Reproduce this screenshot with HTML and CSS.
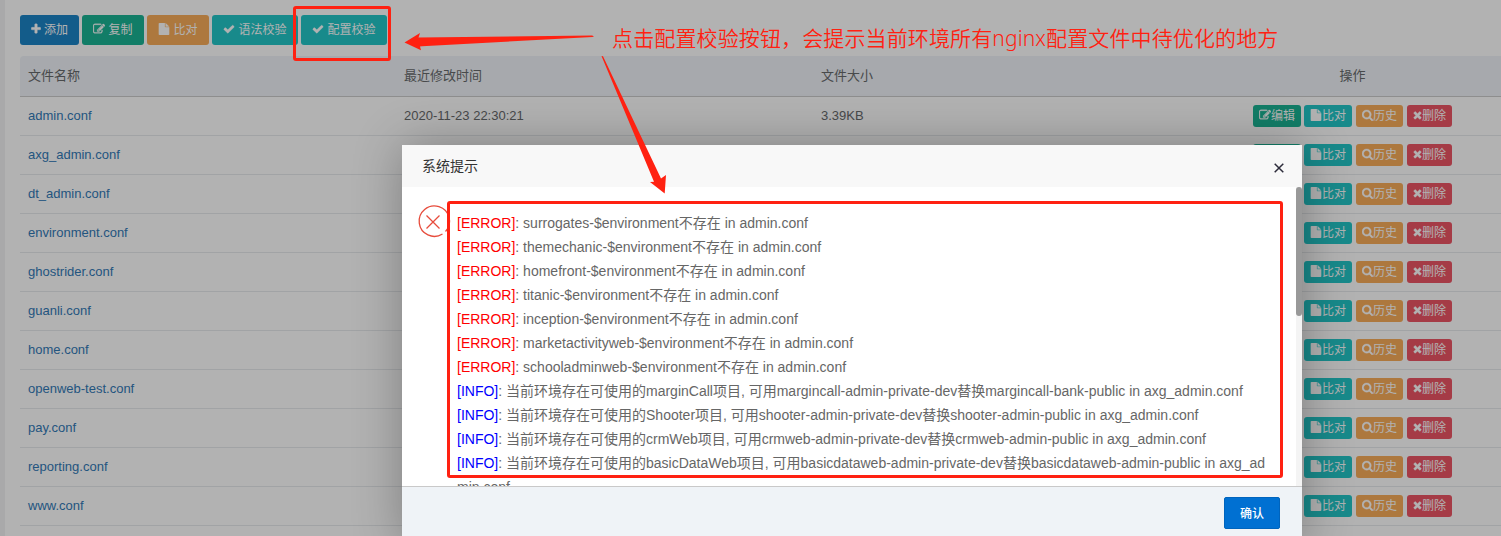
FILE: index.html
```html
<!DOCTYPE html>
<html lang="zh-CN">
<head>
<meta charset="utf-8">
<title>nginx 配置文件</title>
<link rel="stylesheet" href="styles.css">
</head>
<body>
<svg class="sprite" aria-hidden="true">
  <symbol id="plus" viewBox="192 0 1408 1792"><path d="M1600 736v192q0 40-28 68t-68 28h-416v416q0 40-28 68t-68 28h-192q-40 0-68-28t-28-68v-416h-416q-40 0-68-28t-28-68v-192q0-40 28-68t68-28h416v-416q0-40 28-68t68-28h192q40 0 68 28t28 68v416h416q40 0 68 28t28 68z"/></symbol>
  <symbol id="check" viewBox="0 0 1792 1792"><path d="M1671 566q0 40-28 68l-724 724-136 136q-28 28-68 28t-68-28l-136-136-362-362q-28-28-28-68t28-68l136-136q28-28 68-28t68 28l294 295 656-657q28-28 68-28t68 28l136 136q28 28 28 68z"/></symbol>
  <symbol id="search" viewBox="64 0 1664 1792"><path d="M1216 832q0-185-131.500-316.500t-316.500-131.500-316.500 131.500-131.500 316.500 131.500 316.500 316.500 131.500 316.500-131.500 131.500-316.500zm512 832q0 52-38 90t-90 38q-54 0-90-38l-343-342q-179 124-399 124-143 0-273.500-55.500t-225-150-150-225-55.500-273.500 55.500-273.500 150-225 225-150 273.500-55.500 273.500 55.500 225 150 150 225 55.500 273.500q0 220-124 399l343 343q37 37 37 90z"/></symbol>
  <symbol id="file" viewBox="128 0 1536 1792"><path d="M1152 512v-472q22 14 36 28l408 408q14 14 28 36h-472zm-128 32q0 40 28 68t68 28h544v1056q0 40-28 68t-68 28h-1344q-40 0-68-28t-28-68v-1600q0-40 28-68t68-28h800v544z"/></symbol>
  <symbol id="times" viewBox="192 0 1408 1792"><path d="M1490 1322q0 40-28 68l-136 136q-28 28-68 28t-68-28l-294-294-294 294q-28 28-68 28t-68-28l-136-136q-28-28-28-68t28-68l294-294-294-294q-28-28-28-68t28-68l136-136q28-28 68-28t68 28l294 294 294-294q28-28 68-28t68 28l136 136q28 28 28 68t-28 68l-294 294 294 294q28 28 28 68z"/></symbol>
  <symbol id="edit" viewBox="0 0 1792 1792"><path d="M888 1184l116-116-152-152-116 116v56h96v96h56zm440-720q-16-16-33 1l-350 350q-17 17-1 33t33-1l350-350q17-17 1-33zm80 594v190q0 119-84.500 203.500t-203.500 84.500h-832q-119 0-203.500-84.500t-84.500-203.500v-832q0-119 84.500-203.500t203.500-84.500h832q63 0 117 25 15 7 18 23 3 17-9 29l-49 49q-14 14-32 8-23-6-45-6h-832q-66 0-113 47t-47 113v832q0 66 47 113t113 47h832q66 0 113-47t47-113v-126q0-13 9-22l64-64q15-15 35-7t20 29zm-96-738l288 288-672 672h-288v-288zm444 132l-92 92-288-288 92-92q28-28 68-28t68 28l152 152q28 28 28 68t-28 68z"/></symbol>
</svg>

<main class="panel">
  <div class="toolbar">
    <button class="btn primary w-add"><svg class="i-narrow"><use href="#plus"/></svg>添加</button>
    <button class="btn success w-mid"><svg><use href="#edit"/></svg>复制</button>
    <button class="btn warning w-mid"><svg><use href="#file"/></svg>比对</button>
    <button class="btn info w-wide"><svg><use href="#check"/></svg>语法校验</button>
    <button class="btn info w-wide"><svg><use href="#check"/></svg>配置校验</button>
  </div>
  <div class="table" id="files">
    <div class="row head"><span>文件名称</span><span>最近修改时间</span><span>文件大小</span><span class="ops">操作</span></div>
  </div>
</main>

<div class="shade"></div>

<section class="dialog">
  <header class="dialog-title"><span>系统提示</span><svg class="close" viewBox="0 0 10 10"><path d="M.7.7l8.600 8.600M9.300.7L.7 9.300"/></svg></header>
  <div class="dialog-body">
    <svg class="fail" viewBox="0 0 32 32"><path d="M28.500 25.500A15.200 15.200 0 1 0 25.500 28M9.500 9.500l13 13M22.500 9.500l-13 13"/></svg>
    <div class="log">
      <p><b class="error">[ERROR]</b>: surrogates-$environment不存在 in admin.conf</p>
      <p><b class="error">[ERROR]</b>: themechanic-$environment不存在 in admin.conf</p>
      <p><b class="error">[ERROR]</b>: homefront-$environment不存在 in admin.conf</p>
      <p><b class="error">[ERROR]</b>: titanic-$environment不存在 in admin.conf</p>
      <p><b class="error">[ERROR]</b>: inception-$environment不存在 in admin.conf</p>
      <p><b class="error">[ERROR]</b>: marketactivityweb-$environment不存在 in admin.conf</p>
      <p><b class="error">[ERROR]</b>: schooladminweb-$environment不存在 in admin.conf</p>
      <p><b class="note">[INFO]</b>: 当前环境存在可使用的marginCall项目, 可用margincall-admin-private-dev替换margincall-bank-public in axg_admin.conf</p>
      <p><b class="note">[INFO]</b>: 当前环境存在可使用的Shooter项目, 可用shooter-admin-private-dev替换shooter-admin-public in axg_admin.conf</p>
      <p><b class="note">[INFO]</b>: 当前环境存在可使用的crmWeb项目, 可用crmweb-admin-private-dev替换crmweb-admin-public in axg_admin.conf</p>
      <p><b class="note">[INFO]</b>: 当前环境存在可使用的basicDataWeb项目, 可用basicdataweb-admin-private-dev替换basicdataweb-admin-public in axg_ad<br>min.conf</p>
    </div>
    <div class="scroll"><div class="thumb"></div></div>
  </div>
  <footer class="dialog-foot"><button class="confirm">确认</button></footer>
</section>

<div class="mark mark-button"></div>
<div class="mark mark-log"></div>
<svg class="arrows" viewBox="0 0 1501 536">
  <path d="M404.500 42.500L420 33l-1.500 4.500L592 35.500l2 .7-1.500.8L422 46.200l-2 .2 1 3.800z"/>
  <path d="M601.500 56l1.500.3L661 178.500l5-3.500-1.300 18.500L650 182l4-.3z"/>
</svg>
<div class="caption">点击配置校验按钮，会提示当前环境所有nginx配置文件中待优化的地方</div>
<script src="script.js"></script>
</body>
</html>
```
FILE: styles.css
```css
* { box-sizing: border-box; }
body {
  margin: 0;
  height: 536px;
  overflow: hidden;
  background: #f3f3f4;
  color: #676a6c;
  font: 13px/18px "Liberation Sans", "Noto Sans CJK SC", sans-serif;
}
button { font-family: inherit; border: 0; margin: 0; padding: 0; }
.sprite { display: none; }
.panel { margin-left: 5px; padding: 15px 0 0 15px; background: #fff; height: 536px; overflow: hidden; }
.toolbar { display: flex; gap: 3px; height: 41px; }
.btn {
  display: flex; align-items: center; justify-content: center; gap: 3px;
  height: 30px; border-radius: 3px; color: #fff; font-size: 12px; line-height: 18px;
}
.btn svg { width: 12px; height: 12px; margin-bottom: 2px; fill: currentColor; stroke: currentColor; stroke-width: 50; flex: none; overflow: visible; }
.btn .i-narrow { width: 10px; }
.w-add { width: 59px; }
.w-mid { width: 62px; }
.w-wide { width: 86px; }
.primary { background: #1c84c6; }
.success { background: #1ab394; }
.warning { background: #f8ac59; }
.info { background: #23c6c8; }
.danger { background: #ed5565; }
.row {
  display: grid; grid-template-columns: 376px 417px 391px 297px;
  height: 39px; align-items: center; border-bottom: 1px solid #e7eaec;
}
.row > span { padding-left: 8px; }
.row > .ops { padding: 0; display: flex; justify-content: center; }
.head { height: 41px; background: #eff3f8; border-bottom-color: #ccc; border-radius: 4px 0 0 0; }
.name { color: #337ab7; }
.ops .btn { height: 22px; gap: 0; }
.ops .edit { width: 48px; margin-right: 3px; }
.ops .diff { width: 48px; margin-right: 4px; }
.ops .hist { width: 47px; margin-right: 4px; }
.ops .del { width: 45px; }
.ops .hist svg { width: 11px; }
.ops .del svg { width: 9px; }
.shade { position: absolute; inset: 0; background: rgba(0, 0, 0, .3); }

.dialog {
  position: absolute; left: 402px; top: 145px; width: 900px; height: 400px;
  display: flex; flex-direction: column; background: #fff;
  box-shadow: 1px 1px 50px rgba(0, 0, 0, .3); border-radius: 2px;
}
.dialog-title {
  height: 42px; padding: 0 18px 0 20px; background: #f8f8f8; color: #333;
  display: flex; align-items: center; justify-content: space-between; font-size: 14px;
}
.close { width: 10px; height: 10px; margin-top: 4px; stroke: #2d2c3b; stroke-width: 1.500; fill: none; }
.dialog-body { height: 299px; display: flex; overflow: hidden; }
.fail { width: 32px; height: 32px; margin: 19px 8.500px 0 14.500px; flex: none; fill: none; stroke: #e74c3c; stroke-width: 1.300; overflow: visible; }
.log { flex: 1; padding-top: 24px; font-size: 14px; line-height: 24px; color: #666; white-space: nowrap; }
.log p { margin: 0; }
.log b { font-weight: 400; }
.error { color: #f00; }
.note { color: #00f; }
.scroll { width: 6px; background: #f4f4f4; }
.thumb { height: 129px; background: #999; border-radius: 3px; }
.dialog-foot {
  flex: 1; border-top: 1px solid #c9c9c9; background: #eff3f7;
  display: flex; justify-content: flex-end; padding: 10px 22px 0 0;
}
.confirm { width: 56px; height: 32px; padding-bottom: 2px; background: #0070d2; border: 1px solid #0064bd; border-radius: 2px; color: #fff; font-size: 12px; font-weight: 500; }

.mark { position: absolute; border: 3px solid #ff2111; border-radius: 3px; }
.mark-button { left: 293px; top: 6px; width: 98px; height: 55px; }
.mark-log { left: 447px; top: 201px; width: 836px; height: 277px; }
.arrows { position: absolute; left: 0; top: 0; width: 1501px; height: 536px; fill: #ff2111; }
.caption {
  position: absolute; left: 612px; top: 23px; white-space: nowrap; color: #ff2111;
  font: 350 21px/30px "Noto Sans", "Noto Sans CJK SC", sans-serif; letter-spacing: .13px;
}
```
FILE: script.js
```js
const files = [
  ["admin.conf", "2020-11-23 22:30:21", "3.39KB"],
  ["axg_admin.conf"], ["dt_admin.conf"], ["environment.conf"], ["ghostrider.conf"],
  ["guanli.conf"], ["home.conf"], ["openweb-test.conf"], ["pay.conf"],
  ["reporting.conf"], ["www.conf"], [""]
];
const action = (cls, icon, text) =>
  `<button class="btn ${cls}"><svg><use href="#${icon}"/></svg>${text}</button>`;
const table = document.getElementById("files");
for (const [name, time = "", size = ""] of files) {
  table.insertAdjacentHTML("beforeend",
    `<div class="row"><span class="name">${name}</span><span>${time}</span><span>${size}</span><span class="ops">` +
    (name ? action("success edit", "edit", "编辑") + action("info diff", "file", "比对") +
    action("warning hist", "search", "历史") + action("danger del", "times", "删除") : "") +
    `</span></div>`);
}
```
